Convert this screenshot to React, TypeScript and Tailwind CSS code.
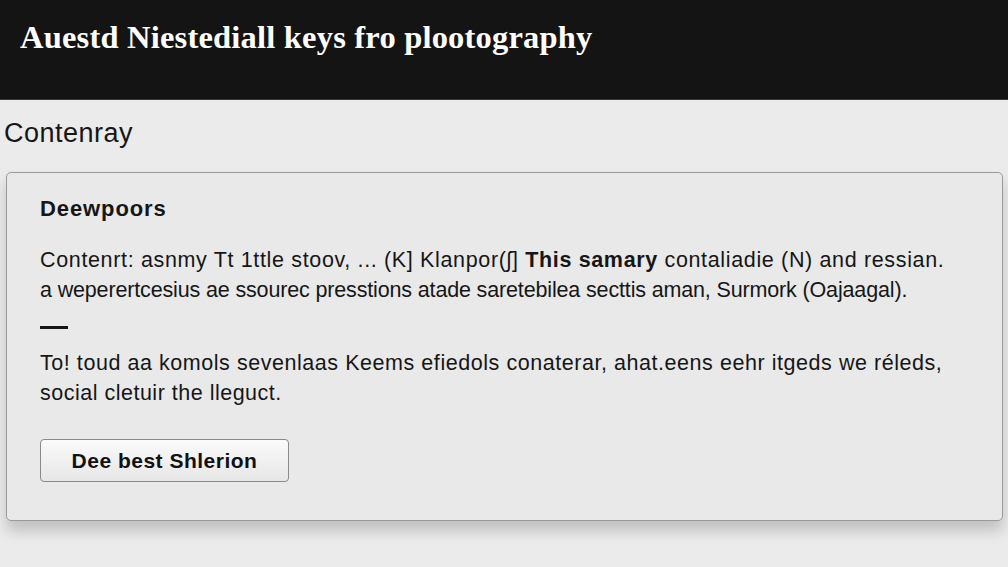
export default function App() {
  return (
    <div className="w-[1008px] h-[567px] overflow-hidden bg-[#ebebeb] font-['Liberation_Sans',Arial,sans-serif] text-[#161616]">
      <header className="h-[100px] bg-[#141414] border-b border-[#3a3a3a] px-5 pt-[13px]">
        <h1 className="font-['Liberation_Serif',serif] font-bold text-[32.5px] text-white tracking-[0.2px] whitespace-nowrap">
          Auestd Niestediall keys fro plootography
        </h1>
      </header>

      <main className="pl-[6px] pr-[5px] pt-[17px]">
        <h2 className="-ml-[2px] text-[27px] leading-[33px] tracking-[0.5px] whitespace-nowrap">Contenray</h2>

        <section className="mt-[22px] h-[349px] rounded-[5px] border border-[#9a9a9a] bg-[#e9e9e9] shadow-[0_10px_14px_rgba(0,0,0,0.18)] px-[33px] pt-[22px]">
          <h3 className="font-bold text-[22px] leading-[28px] tracking-[0.9px] whitespace-nowrap">Deewpoors</h3>

          <div className="mt-[22px] text-[21.5px] leading-[30px] whitespace-nowrap">
            <p className="tracking-[0.65px]">Contenrt: asnmy Tt 1ttle stoov, ... (K] Klanpor(ʃ] <b>This samary</b> contaliadie (N) and ressian.</p>
            <p className="tracking-[-0.15px]">a weperertcesius ae ssourec presstions atade saretebilea secttis aman, Surmork (Oajaagal).</p>
          </div>

          <div className="mt-[21px] w-[28px] h-[3px] bg-[#161616]" />

          <div className="mt-[19px] text-[21.5px] leading-[30px] whitespace-nowrap">
            <p className="tracking-[0.55px]">To! toud aa komols sevenlaas Keems efiedols conaterar, ahat.eens eehr itgeds we réleds,</p>
            <p className="tracking-[0.5px]">social cletuir the lleguct.</p>
          </div>

          <button className="mt-[31px] w-[249px] h-[43px] rounded-[4px] border border-[#8a8a8a] bg-gradient-to-b from-[#fbfbfb] to-[#e6e6e6] font-bold text-[21px] tracking-[0.5px] text-[#111]">
            Dee best Shlerion
          </button>
        </section>
      </main>
    </div>
  );
}
